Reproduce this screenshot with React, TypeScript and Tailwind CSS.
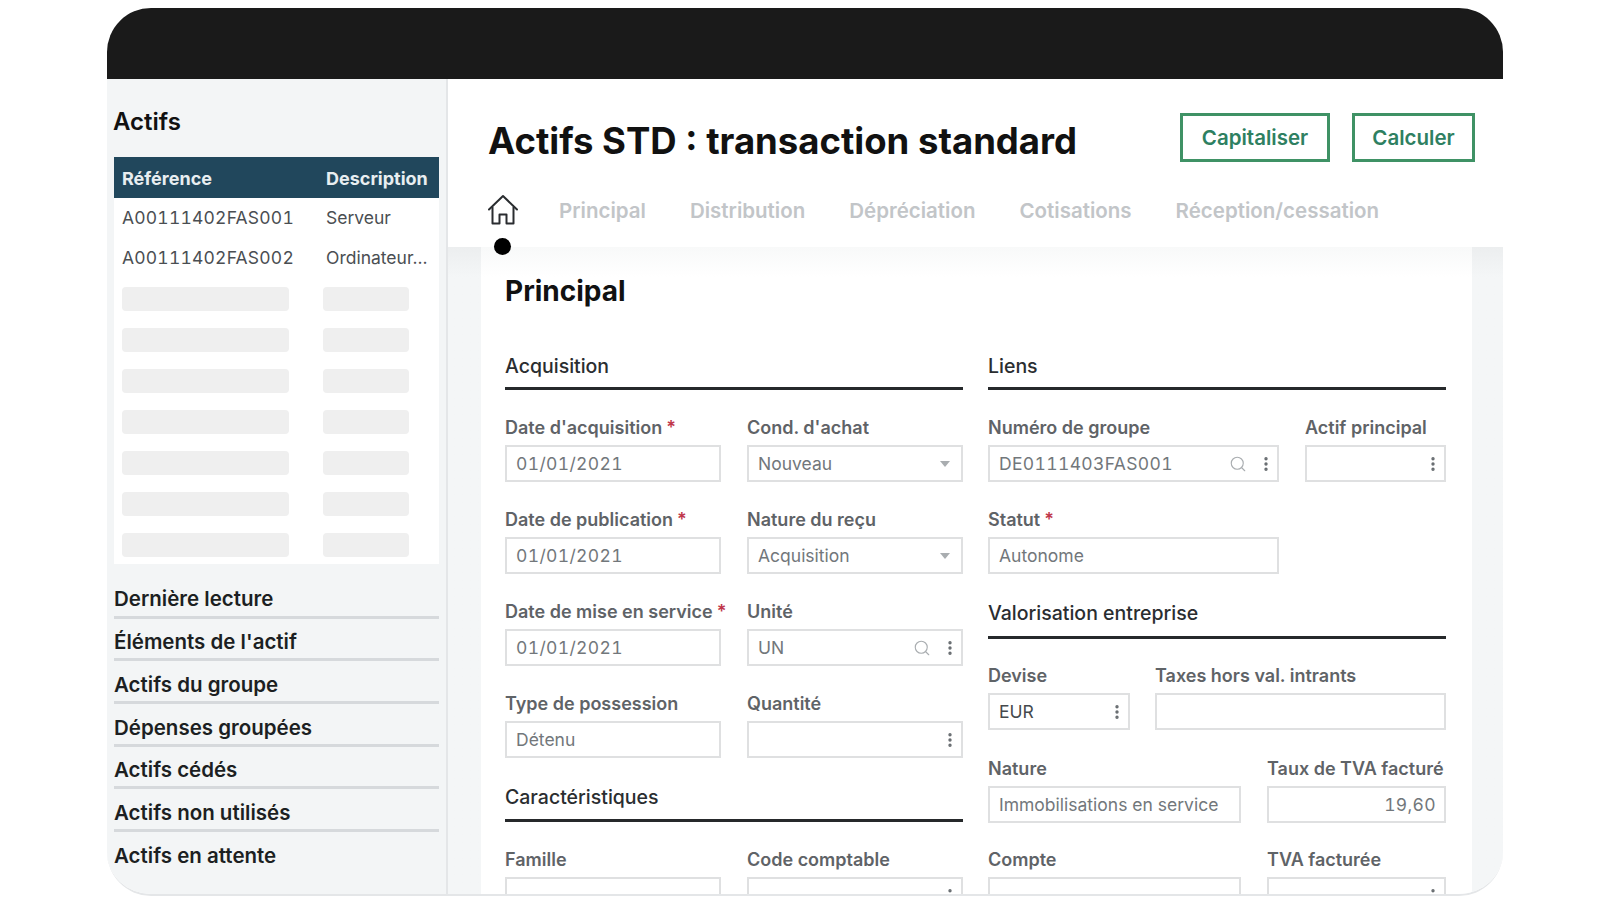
import { Search, EllipsisVertical } from 'lucide-react';

const menuItems = [
  'Dernière lecture',
  "Éléments de l'actif",
  'Actifs du groupe',
  'Dépenses groupées',
  'Actifs cédés',
  'Actifs non utilisés',
  'Actifs en attente',
];

const tabs = ['Principal', 'Distribution', 'Dépréciation', 'Cotisations', 'Réception/cessation'];

function Label({ text, required }: { text: string; required?: boolean }) {
  return (
    <div className="h-[18px] flex items-center text-[18px] leading-[18px] font-semibold text-[#5f6367] whitespace-nowrap">
      {text}
      {required && <span className="ml-[4px] text-[#c0364a]">*</span>}
    </div>
  );
}

type FieldProps = {
  label: string;
  value?: string;
  required?: boolean;
  select?: boolean;
  search?: boolean;
  more?: boolean;
  right?: boolean;
  dark?: boolean;
  numeric?: boolean;
  className?: string;
};

function Field({ label, value, required, select, search, more, right, dark, numeric, className }: FieldProps) {
  return (
    <div className={className}>
      <Label text={label} required={required} />
      <div className="mt-[8px] h-[37px] border-2 border-[#dfe0e1] bg-white flex items-center pl-[9px] pr-[3px]">
        <span
          className={`flex-1 mt-[2px] text-[17.5px] whitespace-nowrap ${right ? 'text-right pr-[5px]' : ''} ${
            dark ? 'text-[#45494d]' : 'text-[#72777b]'
          } ${numeric ? 'tabular-nums tracking-[0.35px]' : ''}`}
        >
          {value}
        </span>
        {search && <Search className="w-[18px] h-[18px] text-[#a9adb0] mr-[10px]" strokeWidth={1.5} />}
        {more && <EllipsisVertical className="w-[18px] h-[18px] text-[#666b6f] -mr-[1px]" strokeWidth={2.5} />}
        {select && (
          <svg className="w-[12px] h-[8px] mr-[7px]" viewBox="0 0 12 8">
            <path d="M1 1h10L6 7z" fill="#a9adb0" />
          </svg>
        )}
      </div>
    </div>
  );
}

function SectionTitle({ text, className }: { text: string; className?: string }) {
  return (
    <div className={`border-b-[3px] border-[#26292b] ${className ?? ''}`}>
      <div className="text-[19.5px] leading-[26px] font-medium text-[#2a2d30]">{text}</div>
    </div>
  );
}

function Sidebar() {
  return (
    <aside className="w-[341px] shrink-0 bg-[#f3f5f6] border-r-2 border-[#e4e6e8] px-[7px] pt-[27px]">
      <h2 className="-ml-[1px] text-[24px] leading-[32px] font-semibold text-[#111]">Actifs</h2>
      <div className="mt-[19px] bg-white h-[407px]">
        <div className="h-[41px] pt-[2px] bg-[#21475c] flex items-center text-[18px] font-bold text-[#e8eef1]">
          <span className="w-[212px] pl-[8px]">Référence</span>
          <span>Description</span>
        </div>
        <div className="h-[40px] flex items-center text-[17.5px] text-[#4a4e52]">
          <span className="w-[212px] pl-[8px] tabular-nums tracking-[0.2px]">A00111402FAS001</span>
          <span>Serveur</span>
        </div>
        <div className="h-[40px] pt-[1px] flex items-center text-[17.5px] text-[#4a4e52]">
          <span className="w-[212px] pl-[8px] tabular-nums tracking-[0.2px]">A00111402FAS002</span>
          <span>Ordinateur...</span>
        </div>
        <div className="mt-[9px] flex flex-col gap-[17px] pl-[8px]">
          {[0, 1, 2, 3, 4, 5, 6].map((i) => (
            <div key={i} className="flex gap-[34px]">
              <div className="w-[167px] h-[24px] rounded-[4px] bg-[#efefef]" />
              <div className="w-[86px] h-[24px] rounded-[4px] bg-[#efefef]" />
            </div>
          ))}
        </div>
      </div>
      <div className="mt-[12px]">
        {menuItems.map((item, i) => (
          <div
            key={item}
            className={`h-[42.7px] pt-[8px] flex items-center text-[20.5px] font-semibold text-[#1c1f22] border-b-[3px] ${
              i < menuItems.length - 1 ? 'border-[#d6d9dc]' : 'border-transparent'
            }`}
          >
            {item}
          </div>
        ))}
      </div>
    </aside>
  );
}

function Header() {
  return (
    <div className="relative bg-white h-[168px] shrink-0 pl-[40px] pr-[28px]">
      <div className="flex items-start justify-between pt-[34px]">
        <h1 className="-mt-[1px] text-[36.5px] leading-[58px] font-bold text-[#111] whitespace-nowrap">
          Actifs STD : transaction standard
        </h1>
        <div className="flex gap-[22px]">
          <button className="w-[150px] h-[49px] pt-[2px] border-[3px] border-[#3f9265] text-[20.5px] font-semibold text-[#2e8061]">
            Capitaliser
          </button>
          <button className="w-[123px] h-[49px] pt-[2px] border-[3px] border-[#3f9265] text-[20.5px] font-semibold text-[#2e8061]">
            Calculer
          </button>
        </div>
      </div>
      <div className="mt-[23px] flex items-center">
        <svg className="w-[30px] h-[31px]" viewBox="0 0 30 31" fill="none" stroke="#2a2d30" strokeWidth="2">
          <path d="M1 15.5 15 2l14 13.5" strokeLinecap="round" strokeLinejoin="round" />
          <path d="M4.5 13v16.5h7v-9h7v9h7V13" strokeLinejoin="round" />
        </svg>
        <div className="ml-[41px] mt-[3px] flex gap-[44px] text-[20.5px] font-semibold text-[#c2c5c8] whitespace-nowrap">
          {tabs.map((t) => (
            <span key={t}>{t}</span>
          ))}
        </div>
      </div>
      {/* active tab marker */}
      <div className="absolute left-[46px] bottom-[-8px] w-[17px] h-[17px] rounded-full bg-black z-10" />
    </div>
  );
}

function Form() {
  return (
    <div className="flex-1 min-h-0 overflow-hidden bg-gradient-to-b from-[#eceeef] to-[#f4f6f7] to-[30px] pl-[33px] pr-[31px]">
      <div className="h-full bg-gradient-to-b from-[#f8f9f9] to-white to-[30px] pl-[24px] pr-[25px] overflow-hidden">
        <h3 className="pt-[26px] text-[28px] leading-[36px] font-bold text-[#111]">Principal</h3>
        <div className="mt-[44px] grid grid-cols-[458px_458px] gap-x-[25px]">
          {/* left column */}
          <div>
            <SectionTitle text="Acquisition" className="pb-[8px]" />
            <div className="mt-[29px] grid grid-cols-[216px_216px] gap-x-[26px] gap-y-[29px]">
              <Field label="Date d'acquisition" value="01/01/2021" required numeric />
              <Field label="Cond. d'achat" value="Nouveau" select />
              <Field label="Date de publication" value="01/01/2021" required numeric />
              <Field label="Nature du reçu" value="Acquisition" select />
              <Field label="Date de mise en service" value="01/01/2021" required numeric />
              <Field label="Unité" value="UN" search more />
              <Field label="Type de possession" value="Détenu" />
              <Field label="Quantité" more />
            </div>
            <SectionTitle text="Caractéristiques" className="mt-[26px] pb-[9px]" />
            <div className="mt-[29px] grid grid-cols-[216px_216px] gap-x-[26px]">
              <Field label="Famille" />
              <Field label="Code comptable" more />
            </div>
          </div>
          {/* right column */}
          <div>
            <SectionTitle text="Liens" className="pb-[8px]" />
            <div className="mt-[29px] grid grid-cols-[291px_141px] gap-x-[26px] gap-y-[29px]">
              <Field label="Numéro de groupe" value="DE0111403FAS001" search more numeric />
              <Field label="Actif principal" more />
              <Field label="Statut" value="Autonome" required />
            </div>
            <SectionTitle text="Valorisation entreprise" className="mt-[26px] pb-[10px]" />
            <div className="mt-[28px] grid grid-cols-[142px_291px] gap-x-[25px]">
              <Field label="Devise" value="EUR" more dark />
              <Field label="Taxes hors val. intrants" />
            </div>
            <div className="mt-[30px] grid grid-cols-[253px_179px] gap-x-[26px]">
              <Field label="Nature" value="Immobilisations en service" />
              <Field label="Taux de TVA facturé" value="19,60" right numeric />
            </div>
            <div className="mt-[28px] grid grid-cols-[253px_179px] gap-x-[26px]">
              <Field label="Compte" />
              <Field label="TVA facturée" more />
            </div>
          </div>
        </div>
      </div>
    </div>
  );
}

export default function App() {
  return (
    <div className="w-[1600px] h-[900px] bg-white pt-[8px] pl-[107px] font-['Inter',sans-serif]">
      <div className="w-[1396px] h-[888px] rounded-[44px] overflow-hidden flex flex-col border-b-2 border-[#e4e6e8]">
        <div className="h-[71px] shrink-0 bg-[#1a1a1a]" />
        <div className="flex-1 min-h-0 flex">
          <Sidebar />
          <div className="flex-1 min-w-0 flex flex-col">
            <Header />
            <Form />
          </div>
        </div>
      </div>
    </div>
  );
}
